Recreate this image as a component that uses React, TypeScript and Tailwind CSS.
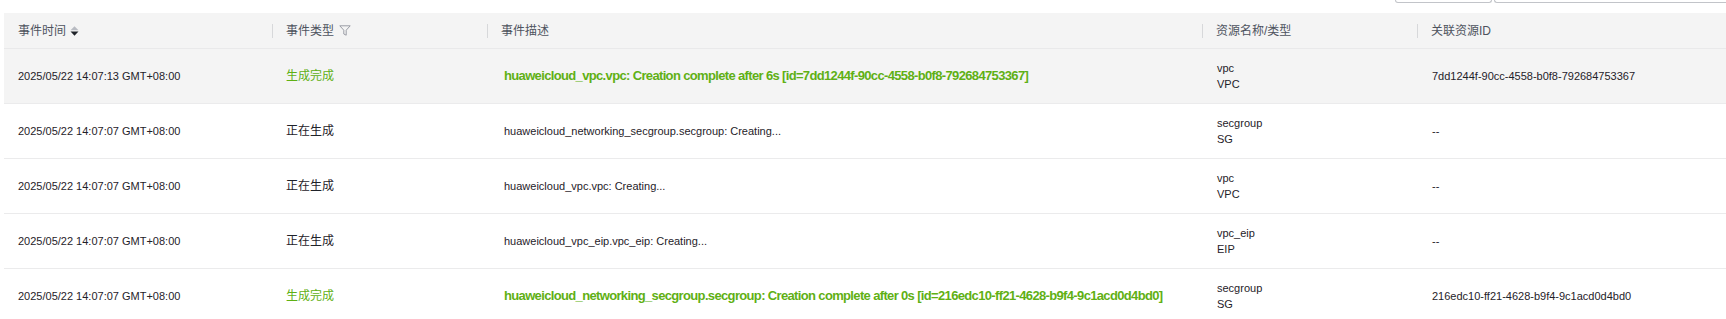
import React from 'react';

type Row = {
  time: string;
  type: string;
  done: boolean;
  desc: string;
  name: string;
  kind: string;
  resId: string;
  active?: boolean;
};

const ROWS: Row[] = [
  {
    time: '2025/05/22 14:07:13 GMT+08:00',
    type: '生成完成',
    done: true,
    desc: 'huaweicloud_vpc.vpc: Creation complete after 6s [id=7dd1244f-90cc-4558-b0f8-792684753367]',
    name: 'vpc',
    kind: 'VPC',
    resId: '7dd1244f-90cc-4558-b0f8-792684753367',
    active: true,
  },
  {
    time: '2025/05/22 14:07:07 GMT+08:00',
    type: '正在生成',
    done: false,
    desc: 'huaweicloud_networking_secgroup.secgroup: Creating...',
    name: 'secgroup',
    kind: 'SG',
    resId: '--',
  },
  {
    time: '2025/05/22 14:07:07 GMT+08:00',
    type: '正在生成',
    done: false,
    desc: 'huaweicloud_vpc.vpc: Creating...',
    name: 'vpc',
    kind: 'VPC',
    resId: '--',
  },
  {
    time: '2025/05/22 14:07:07 GMT+08:00',
    type: '正在生成',
    done: false,
    desc: 'huaweicloud_vpc_eip.vpc_eip: Creating...',
    name: 'vpc_eip',
    kind: 'EIP',
    resId: '--',
  },
  {
    time: '2025/05/22 14:07:07 GMT+08:00',
    type: '生成完成',
    done: true,
    desc: 'huaweicloud_networking_secgroup.secgroup: Creation complete after 0s [id=216edc10-ff21-4628-b9f4-9c1acd0d4bd0]',
    name: 'secgroup',
    kind: 'SG',
    resId: '216edc10-ff21-4628-b9f4-9c1acd0d4bd0',
  },
];

const COLS = 'grid grid-cols-[268px_215px_715px_215px_1fr]';

function SortIcon() {
  return (
    <svg width="9" height="10" viewBox="0 0 9 10" className="ml-[4px]">
      <polygon points="0.5,4.3 4.5,0.3 8.5,4.3" fill="#b8bbc2" />
      <polygon points="0.5,5.5 4.5,9.7 8.5,5.5" fill="#1f2229" />
    </svg>
  );
}

function FilterIcon() {
  return (
    <svg width="12" height="11" viewBox="0 0 12 11" className="ml-[5px]">
      <path
        d="M0.8 0.8 H11.2 L7.2 5.2 V10.2 L4.8 9 V5.2 Z"
        fill="none"
        stroke="#9a9da5"
        strokeWidth="1"
        strokeLinejoin="round"
      />
    </svg>
  );
}

function HeadCell({ label, first, children }: { label: string; first?: boolean; children?: React.ReactNode }) {
  return (
    <div className="relative flex items-center pl-[14px]">
      {!first && <span className="absolute left-0 top-[11px] h-[14px] w-px bg-[#d7d8da]" />}
      <span>{label}</span>
      {children}
    </div>
  );
}

export default function App() {
  return (
    <div
      className="w-[1726px] h-[319px] overflow-hidden bg-white text-[11px] text-[#1f2229]"
      style={{ fontFamily: '"Liberation Sans", Arial, "Noto Sans CJK SC", sans-serif' }}
    >
      {/* cut-off search boxes */}
      <div className="h-[13px] flex justify-end gap-[2px]">
        <div className="w-[97px] h-[3px] border border-t-0 border-[#c2c4c9] rounded-b-[3px]" />
        <div className="w-[232px] h-[3px] border border-t-0 border-r-0 border-[#c2c4c9] rounded-bl-[3px]" />
      </div>

      <div className="ml-[4px]">
        {/* header */}
        <div className={`${COLS} h-[36px] bg-[#f4f4f4] border-b border-[#e9e9ea] text-[#4e535e] text-[12px]`}>
          <HeadCell label="事件时间" first>
            <SortIcon />
          </HeadCell>
          <HeadCell label="事件类型">
            <FilterIcon />
          </HeadCell>
          <HeadCell label="事件描述" />
          <HeadCell label="资源名称/类型" />
          <HeadCell label="关联资源ID" />
        </div>

        {/* rows */}
        {ROWS.map((r, i) => (
          <div
            key={i}
            className={`${COLS} h-[55px] border-b border-[#ebebec] ${r.active ? 'bg-[#f4f4f4]' : 'bg-white'}`}
          >
            <div className="flex items-center pl-[14px]">{r.time}</div>
            <div className={`flex items-center pl-[14px] text-[12px] ${r.done ? 'text-[#5fb014]' : 'text-[#1f2229]'}`}>
              {r.type}
            </div>
            <div
              className={`flex items-center pl-[17px] ${r.done ? 'text-[13px] font-bold text-[#5fb014] tracking-[-0.65px]' : ''}`}
            >
              {r.desc}
            </div>
            <div className="flex flex-col justify-center pl-[15px] leading-[16px]">
              <span>{r.name}</span>
              <span>{r.kind}</span>
            </div>
            <div className="flex items-center pl-[15px]">{r.resId}</div>
          </div>
        ))}
      </div>
    </div>
  );
}
